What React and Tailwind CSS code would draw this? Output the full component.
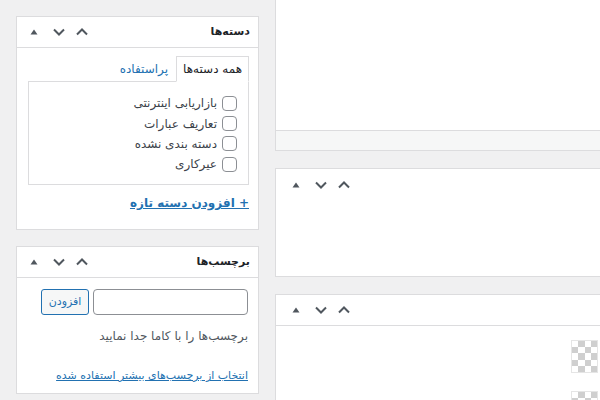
import React from "react";

const font = { fontFamily: '"DejaVu Sans", Tahoma, sans-serif' };

function HeaderIcons() {
  return (
    <div className="flex items-center" dir="ltr">
      <svg width="8" height="6" viewBox="0 0 8 6" className="ml-[13px]">
        <polygon points="4,0.5 7.5,5.5 0.5,5.5" fill="#50575e" />
      </svg>
      <svg width="14" height="10" viewBox="0 0 14 10" className="ml-[14px]">
        <polyline points="2,2.5 7,7.5 12,2.5" fill="none" stroke="#50575e" strokeWidth="2" />
      </svg>
      <svg width="14" height="10" viewBox="0 0 14 10" className="ml-[9px]">
        <polyline points="2,7.5 7,2.5 12,7.5" fill="none" stroke="#50575e" strokeWidth="2" />
      </svg>
    </div>
  );
}

function Panel({ title, children, className = "" }) {
  return (
    <div className={`shrink-0 border border-[#dcdcde] bg-white ${className}`}>
      <div dir="rtl" className="flex h-[31px] items-center justify-between border-b border-[#dcdcde] pr-[8px]">
        <span className="text-[11px] font-bold text-[#1d2327]">{title}</span>
        <HeaderIcons />
      </div>
      {children}
    </div>
  );
}

const categories = ["بازاریابی اینترنتی", "تعاریف عبارات", "دسته بندی نشده", "عیرکاری"];

function Checker() {
  return (
    <div className="grid h-[33px] w-[27px] grid-cols-4 border border-[#e5e5e5]">
      {Array.from({ length: 20 }).map((_, i) => (
        <div key={i} className={(Math.floor(i / 4) + (i % 4)) % 2 ? "bg-[#cfcfcf]" : "bg-white"} />
      ))}
    </div>
  );
}

export default function App() {
  return (
    <div style={font} className="flex h-[400px] w-[600px] overflow-hidden bg-[#f0f0f1]">
      <div className="flex w-[259px] shrink-0 flex-col gap-[16px] pl-[16px] pt-[16px]">
        <Panel title="دسته‌ها" className="h-[214px]">
          <div dir="rtl" className="pl-[11px] pr-[9px] pt-[8px]">
            <div className="flex items-end">
              <div className="-mb-px z-10 border border-b-white border-[#dcdcde] bg-white px-[6px] py-[3px] text-[12px] text-[#1d2327]">
                همه دسته‌ها
              </div>
              <div className="px-[8px] py-[3px] text-[12px] text-[#2271b1]">پراستفاده</div>
            </div>
            <div className="h-[104px] border border-[#dcdcde] bg-white pr-[11px] pt-[11px]">
              {categories.map((c) => (
                <div key={c} className="flex h-[20.4px] items-center gap-[5px] leading-none">
                  <span className="h-[15px] w-[15px] shrink-0 rounded-[4px] border border-[#8c8f94] bg-white" />
                  <span className="text-[12px] leading-none text-[#3c434a]">{c}</span>
                </div>
              ))}
            </div>
            <div className="mt-[9px] text-[12px] font-bold text-[#2271b1] underline">+ افزودن دسته تازه</div>
          </div>
        </Panel>
        <Panel title="برچسب‌ها" className="h-[148px]">
          <div dir="rtl" className="pl-[12px] pr-[10px] pt-[11px]">
            <div className="flex gap-[4px]">
              <div className="h-[26px] w-[155px] rounded-[4px] border border-[#8c8f94] bg-white" />
              <div className="flex h-[26px] w-[48px] items-center justify-center rounded-[3px] border border-[#2271b1] bg-[#f6f7f7] text-[11px] text-[#2271b1]">
                افزودن
              </div>
            </div>
            <div className="mt-[12px] text-[12px] text-[#50575e]">برچسب‌ها را با کاما جدا نمایید</div>
            <div className="mt-[23px] text-[11px] text-[#2271b1] underline">انتخاب از برچسب‌های بیشتر استفاده شده</div>
          </div>
        </Panel>
      </div>
      <div className="ml-[16px] flex w-[340px] shrink-0 flex-col gap-[17px]">
        <div className="-mt-px flex h-[152px] shrink-0 flex-col border border-[#dcdcde] bg-white">
          <div className="flex-1" />
          <div className="h-[20px] border-t border-[#dcdcde] bg-[#f6f7f7]" />
        </div>
        <div className="h-[109px] shrink-0 border border-[#dcdcde] bg-white">
          <div className="flex h-[31px] items-center pl-[3px]">
            <HeaderIcons />
          </div>
        </div>
        <div className="h-[130px] shrink-0 border border-[#dcdcde] bg-white">
          <div className="flex h-[31px] items-center border-b border-[#dcdcde] pl-[3px]">
            <HeaderIcons />
          </div>
          <div className="flex flex-col items-end gap-[18px] pr-[16px] pt-[14px]">
            <Checker />
            <Checker />
          </div>
        </div>
      </div>
    </div>
  );
}
